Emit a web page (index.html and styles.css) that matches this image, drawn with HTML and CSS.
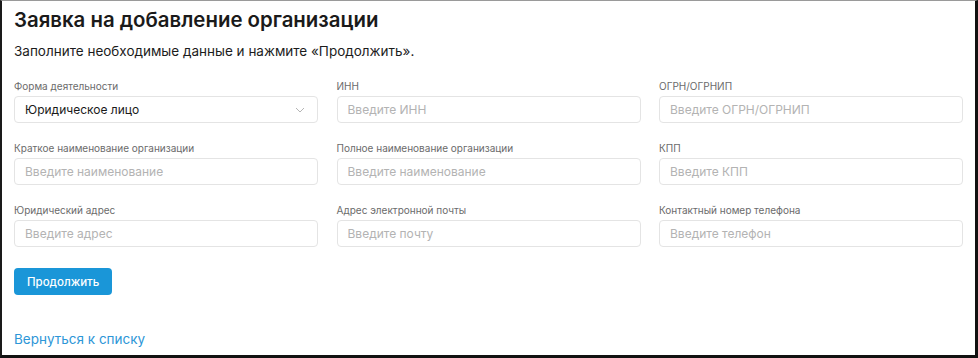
FILE: index.html
```html
<!DOCTYPE html>
<html lang="ru">
<head>
    <meta charset="UTF-8">
    <meta name="viewport" content="width=device-width, initial-scale=1.0">
    <title>Заявка на добавление организации</title>
    <link rel="stylesheet" href="styles.css">
</head>
<body>
    <div class="frame">
        <h1>Заявка на добавление организации</h1>
        <p class="lead">Заполните необходимые данные и нажмите «Продолжить».</p>

        <form class="form-grid">
            <div class="field">
                <label for="forma">Форма деятельности</label>
                <div class="select">
                    <span>Юридическое лицо</span>
                    <svg width="10" height="6" viewBox="0 0 10 6"><path d="M1 1l4 4 4-4" fill="none" stroke="#b5b5b5" stroke-width="1"/></svg>
                </div>
            </div>
            <div class="field">
                <label for="inn">ИНН</label>
                <input type="text" id="inn" placeholder="Введите ИНН">
            </div>
            <div class="field">
                <label for="ogrn">ОГРН/ОГРНИП</label>
                <input type="text" id="ogrn" placeholder="Введите ОГРН/ОГРНИП">
            </div>

            <div class="field">
                <label for="short">Краткое наименование организации</label>
                <input type="text" id="short" placeholder="Введите наименование">
            </div>
            <div class="field">
                <label for="full">Полное наименование организации</label>
                <input type="text" id="full" placeholder="Введите наименование">
            </div>
            <div class="field">
                <label for="kpp">КПП</label>
                <input type="text" id="kpp" placeholder="Введите КПП">
            </div>

            <div class="field">
                <label for="address">Юридический адрес</label>
                <input type="text" id="address" placeholder="Введите адрес">
            </div>
            <div class="field">
                <label for="email">Адрес электронной почты</label>
                <input type="text" id="email" placeholder="Введите почту">
            </div>
            <div class="field">
                <label for="phone">Контактный номер телефона</label>
                <input type="text" id="phone" placeholder="Введите телефон">
            </div>
        </form>

        <button type="button" class="btn">Продолжить</button>

        <a href="#" class="back">Вернуться к списку</a>
    </div>
</body>
</html>
```

FILE: styles.css
```css
html, body {
    margin: 0;
    height: 100%;
}

body {
    font-family: Inter, "Noto Sans", sans-serif;
    color: #1c1c1c;
    background-color: #fff;
}

.frame {
    box-sizing: border-box;
    height: 358px;
    border-top: 1px solid #9a9a9a;
    border-left: 2px solid #1a1a1a;
    border-right: 3px solid #111;
    border-bottom: 3px solid #111;
    padding: 6px 13px 0 12px;
}

h1 {
    margin: 0;
    font-size: 20.4px;
    font-weight: 600;
    line-height: 26px;
    color: #1a1a1a;
}

.lead {
    margin: 9px 0 0;
    font-size: 13.5px;
    line-height: 18px;
}

.form-grid {
    display: grid;
    grid-template-columns: repeat(3, 304px);
    column-gap: 18.5px;
    row-gap: 18px;
    margin-top: 19px;
}

.field label {
    display: block;
    font-size: 10px;
    line-height: 14px;
    color: #6b6b6b;
    margin-bottom: 3px;
}

.field input,
.select {
    box-sizing: border-box;
    width: 100%;
    height: 27px;
    padding: 0 10px;
    border: 1px solid #e4e4e4;
    border-radius: 4px;
    font-family: inherit;
    font-size: 12px;
    color: #1a1a1a;
    outline: none;
}

.field input::placeholder {
    color: #b3b3b3;
}

.select {
    display: flex;
    align-items: center;
    justify-content: space-between;
    padding-right: 12px;
}

.btn {
    display: block;
    margin-top: 21px;
    background-color: #1a96d8;
    color: white;
    border: none;
    border-radius: 4px;
    height: 27px;
    padding: 0 13px;
    font-family: inherit;
    font-size: 11.5px;
    font-weight: 500;
    cursor: pointer;
}

.back {
    display: inline-block;
    margin-top: 36px;
    font-size: 13.5px;
    color: #2d96d7;
    text-decoration: none;
}
```
